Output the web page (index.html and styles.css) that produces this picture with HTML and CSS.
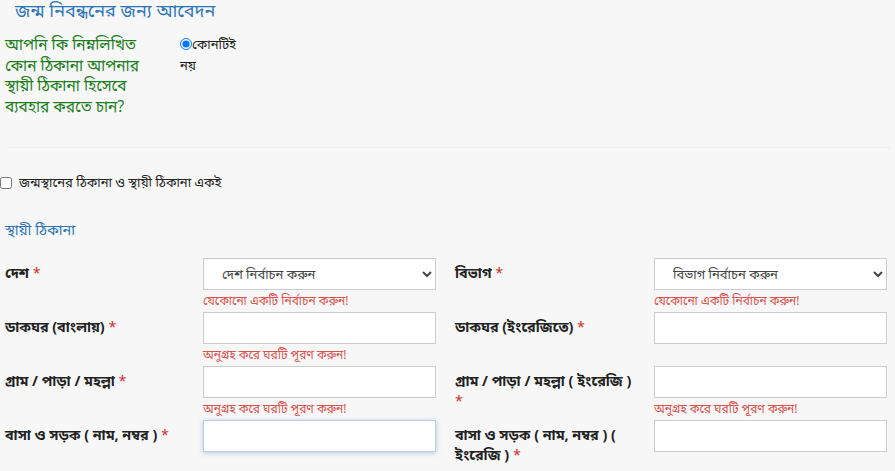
FILE: index.html
```html
<!DOCTYPE html>
<html lang="bn">
<head>
<meta charset="utf-8">
<link rel="stylesheet" href="styles.css">
</head>
<body>
<div class="page">
  <h2 class="title">জন্ম নিবন্ধনের জন্য আবেদন</h2>
  <div class="question">
    <div class="q-text">আপনি কি নিম্নলিখিত<br>কোন ঠিকানা আপনার<br>স্থায়ী ঠিকানা হিসেবে<br>ব্যবহার করতে চান?</div>
    <label class="q-option"><input type="radio" name="addr" checked>কোনটিই নয়</label>
  </div>
  <hr class="divider">
  <label class="same"><input type="checkbox"><span>জন্মস্থানের ঠিকানা ও স্থায়ী ঠিকানা একই</span></label>
  <h3 class="section">স্থায়ী ঠিকানা</h3>
  <div class="grid">
    <div class="lbl">দেশ <span class="req">*</span></div>
    <div class="field">
      <select class="ctl sel"><option>দেশ নির্বাচন করুন</option></select>
      <div class="err">যেকোনো একটি নির্বাচন করুন!</div>
    </div>
    <div class="sp"></div>
    <div class="lbl">বিভাগ <span class="req">*</span></div>
    <div class="field">
      <select class="ctl sel"><option>বিভাগ নির্বাচন করুন</option></select>
      <div class="err">যেকোনো একটি নির্বাচন করুন!</div>
    </div>

    <div class="lbl">ডাকঘর (বাংলায়) <span class="req">*</span></div>
    <div class="field">
      <input class="ctl" type="text">
      <div class="err">অনুগ্রহ করে ঘরটি পূরণ করুন!</div>
    </div>
    <div class="sp"></div>
    <div class="lbl">ডাকঘর (ইংরেজিতে) <span class="req">*</span></div>
    <div class="field">
      <input class="ctl" type="text">
      <div class="err"></div>
    </div>

    <div class="lbl">গ্রাম / পাড়া / মহল্লা <span class="req">*</span></div>
    <div class="field">
      <input class="ctl" type="text">
      <div class="err">অনুগ্রহ করে ঘরটি পূরণ করুন!</div>
    </div>
    <div class="sp"></div>
    <div class="lbl">গ্রাম / পাড়া / মহল্লা ( ইংরেজি ) <span class="req">*</span></div>
    <div class="field">
      <input class="ctl" type="text">
      <div class="err">অনুগ্রহ করে ঘরটি পূরণ করুন!</div>
    </div>

    <div class="lbl">বাসা ও সড়ক ( নাম, নম্বর ) <span class="req">*</span></div>
    <div class="field">
      <input class="ctl focus" type="text" autofocus>
    </div>
    <div class="sp"></div>
    <div class="lbl">বাসা ও সড়ক ( নাম, নম্বর ) ( ইংরেজি ) <span class="req">*</span></div>
    <div class="field">
      <input class="ctl" type="text">
    </div>
  </div>
</div>
</body>
</html>
```
FILE: styles.css
```css
html, body {
  margin: 0;
  padding: 0;
  background: #f7f7f7;
}
body {
  font-family: "Noto Sans", "Noto Sans Bengali", sans-serif;
  color: #222;
  font-size: 13px;
}
.page {
  width: 895px;
  overflow: hidden;
}
.title {
  margin: -3px 0 0 15px;
  font-size: 18px;
  line-height: 26px;
  font-weight: normal;
  color: #2f74b5;
}
.question {
  display: flex;
  margin-top: 11px;
  padding-left: 5px;
}
.q-text {
  width: 175px;
  color: #1c7d1c;
  font-size: 15.5px;
  line-height: 20.5px;
}
.q-option {
  display: block;
  width: 58px;
  font-size: 13px;
  line-height: 21px;
}
.q-option input {
  margin: 0;
  width: 12px;
  height: 12px;
  vertical-align: -1px;
}
.divider {
  border: 0;
  border-top: 1px solid #ececec;
  margin: 31px 5px 0 8px;
}
.same {
  display: flex;
  align-items: center;
  margin-top: 25px;
  font-size: 13px;
}
.same input {
  margin: 0 7px 0 0;
  width: 12px;
  height: 12px;
}
.section {
  margin: 28px 0 0 5px;
  font-size: 14.5px;
  font-weight: normal;
  color: #2f74b5;
  line-height: 18px;
}
.grid {
  display: grid;
  grid-template-columns: 198px 233px 19px 199px 233px;
  padding-left: 5px;
  margin-top: 20px;
}
.lbl {
  font-size: 14.3px;
  font-weight: bold;
  line-height: 20px;
  padding: 5px 15px 0 0;
}
.req {
  color: #c9302c;
  font-weight: normal;
}
.ctl {
  display: block;
  box-sizing: border-box;
  width: 233px;
  height: 32px;
  border: 1px solid #ccc;
  background: #fff;
  font: inherit;
  font-size: 13px;
  padding: 0 14px;
  margin: 0;
  border-radius: 0;
  outline: none;
}
.sel {
  color: #444;
}
.focus {
  border-color: #b9cde0;
  box-shadow: 0 1px 5px rgba(60, 110, 170, 0.35);
}
.err {
  height: 22px;
  line-height: 22px;
  color: #d9534f;
  font-size: 12px;
}
```
